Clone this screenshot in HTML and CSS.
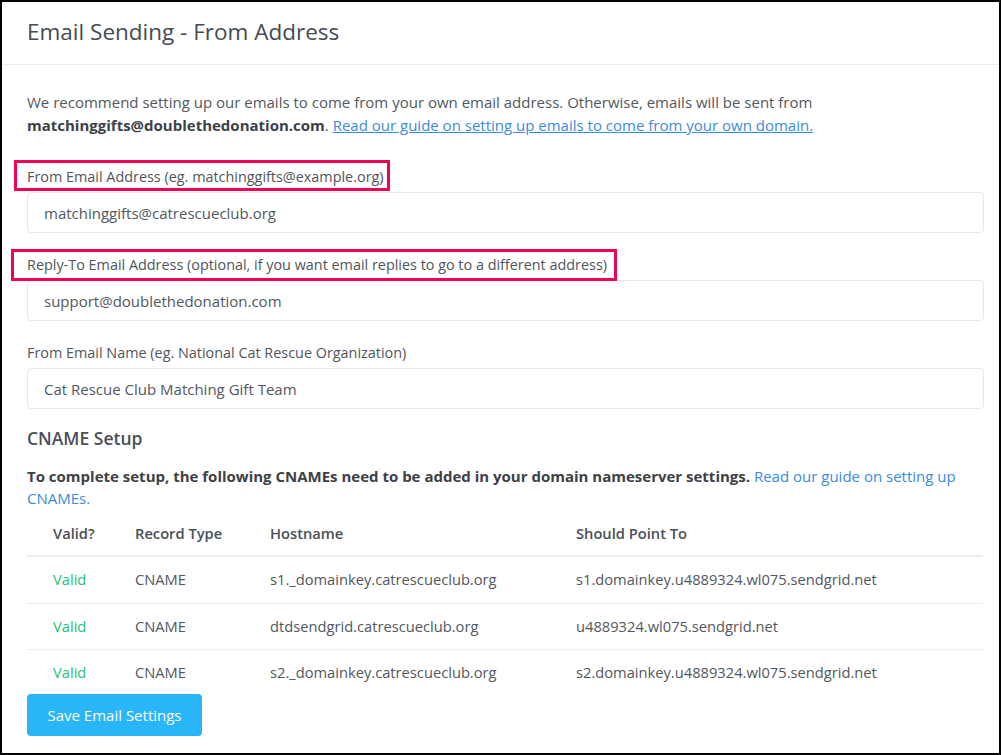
FILE: index.html
```html
<!DOCTYPE html>
<html>
<head>
<meta charset="utf-8">
<link rel="stylesheet" href="styles.css">
</head>
<body>
<div class="frame">
  <div class="header">
    <h1 class="title">Email Sending - From Address</h1>
  </div>
  <div class="content">
    <p class="intro">We recommend setting up our emails to come from your own email address. Otherwise, emails will be sent from <b>matchinggifts@doublethedonation.com</b>. <a class="ulink" href="#">Read our guide on setting up emails to come from your own domain.</a></p>

    <div class="group">
      <label class="label"><span class="hl hl-1">From Email Address (eg. matchinggifts@example.org)</span></label>
      <div class="input">matchinggifts@catrescueclub.org</div>
    </div>
    <div class="group">
      <label class="label"><span class="hl hl-2">Reply-To Email Address (optional, if you want email replies to go to a different address)</span></label>
      <div class="input">support@doublethedonation.com</div>
    </div>
    <div class="group">
      <label class="label">From Email Name (eg. National Cat Rescue Organization)</label>
      <div class="input">Cat Rescue Club Matching Gift Team</div>
    </div>

    <h2 class="subtitle">CNAME Setup</h2>
    <p class="note"><b>To complete setup, the following CNAMEs need to be added in your domain nameserver settings.</b> <a class="link" href="#">Read our guide on setting up CNAMEs.</a></p>

    <table class="table">
      <colgroup>
        <col class="c1"><col class="c2"><col class="c3"><col class="c4">
      </colgroup>
      <thead>
        <tr><th>Valid?</th><th>Record Type</th><th>Hostname</th><th>Should Point To</th></tr>
      </thead>
      <tbody>
        <tr><td class="ok">Valid</td><td>CNAME</td><td>s1._domainkey.catrescueclub.org</td><td>s1.domainkey.u4889324.wl075.sendgrid.net</td></tr>
        <tr><td class="ok">Valid</td><td>CNAME</td><td>dtdsendgrid.catrescueclub.org</td><td>u4889324.wl075.sendgrid.net</td></tr>
        <tr><td class="ok">Valid</td><td>CNAME</td><td>s2._domainkey.catrescueclub.org</td><td>s2.domainkey.u4889324.wl075.sendgrid.net</td></tr>
      </tbody>
    </table>

    <button class="btn">Save Email Settings</button>
  </div>
</div>
</body>
</html>
```

FILE: styles.css
```css
html, body {
  margin: 0;
  padding: 0;
  background: #fff;
}
body {
  font-family: "Open Sans", "Noto Sans", sans-serif;
  font-size: 15px;
  color: #52585e;
}
.frame {
  box-sizing: border-box;
  width: 1001px;
  height: 755px;
  border: 2px solid #000;
  overflow: hidden;
}
.header {
  height: 62px;
  border-bottom: 1px solid #ececec;
  display: flex;
  align-items: center;
  padding-left: 25px;
}
.title {
  margin: 0;
  font-size: 22.5px;
  font-weight: 500;
  color: #454b51;
  position: relative;
  top: -2px;
}
.content {
  padding: 26px 15px 0 25px;
}
.intro {
  margin: 0 0 29px;
  line-height: 23px;
}
.intro b { font-weight: 700; color: #3d4146; }
.ulink {
  color: #3c8be0;
  text-decoration: underline;
}
.link {
  color: #3c8be0;
  text-decoration: none;
}
.group {
  display: flex;
  flex-direction: column;
  margin-bottom: 21px;
}
.label {
  font-size: 14.4px;
  line-height: 21px;
  margin-bottom: 5px;
  color: #4f555b;
}
.hl {
  position: relative;
  display: inline-block;
}
.hl::after {
  content: "";
  position: absolute;
  border: 3px solid #f0044f;
}
.hl-1::after { left: -13px; right: -6px; top: -6px; bottom: -4px; }
.hl-2::after { left: -16px; right: -10px; top: -5px; bottom: -6px; }
.input {
  height: 41px;
  box-sizing: border-box;
  border: 1px solid #e8e8e8;
  border-radius: 4px;
  padding: 0 16px;
  display: flex;
  align-items: center;
  color: #52585e;
  font-size: 15px;
}
.subtitle {
  margin: -4px 0 15px;
  font-size: 17.5px;
  font-weight: 600;
  color: #4a5056;
  line-height: 24px;
}
.note {
  margin: 0 0 2px;
  line-height: 22px;
}
.note b { color: #3d4146; }
.table {
  width: 956px;
  border-collapse: collapse;
  table-layout: fixed;
  font-size: 14.7px;
}
.c1 { width: 82px; }
.c2 { width: 135px; }
.c3 { width: 306px; }
.c4 { width: 433px; }
.table th {
  text-align: left;
  font-weight: 600;
  color: #4a5056;
  padding: 12px 0 11px 26px;
  line-height: 21px;
  border-bottom: 2px solid #ececec;
}
.table td {
  padding: 12px 0 12.5px 26px;
  line-height: 21px;
  border-bottom: 1px solid #ececec;
}
.table tbody tr:last-child td { border-bottom: none; padding-bottom: 10.5px; }
.table td.ok { color: #27c17a; }
.btn {
  margin-top: 0;
  height: 42px;
  width: 175px;
  background: #29b6f8;
  border: none;
  border-radius: 4px;
  color: #fff;
  font-family: inherit;
  font-size: 15px;
}
```
